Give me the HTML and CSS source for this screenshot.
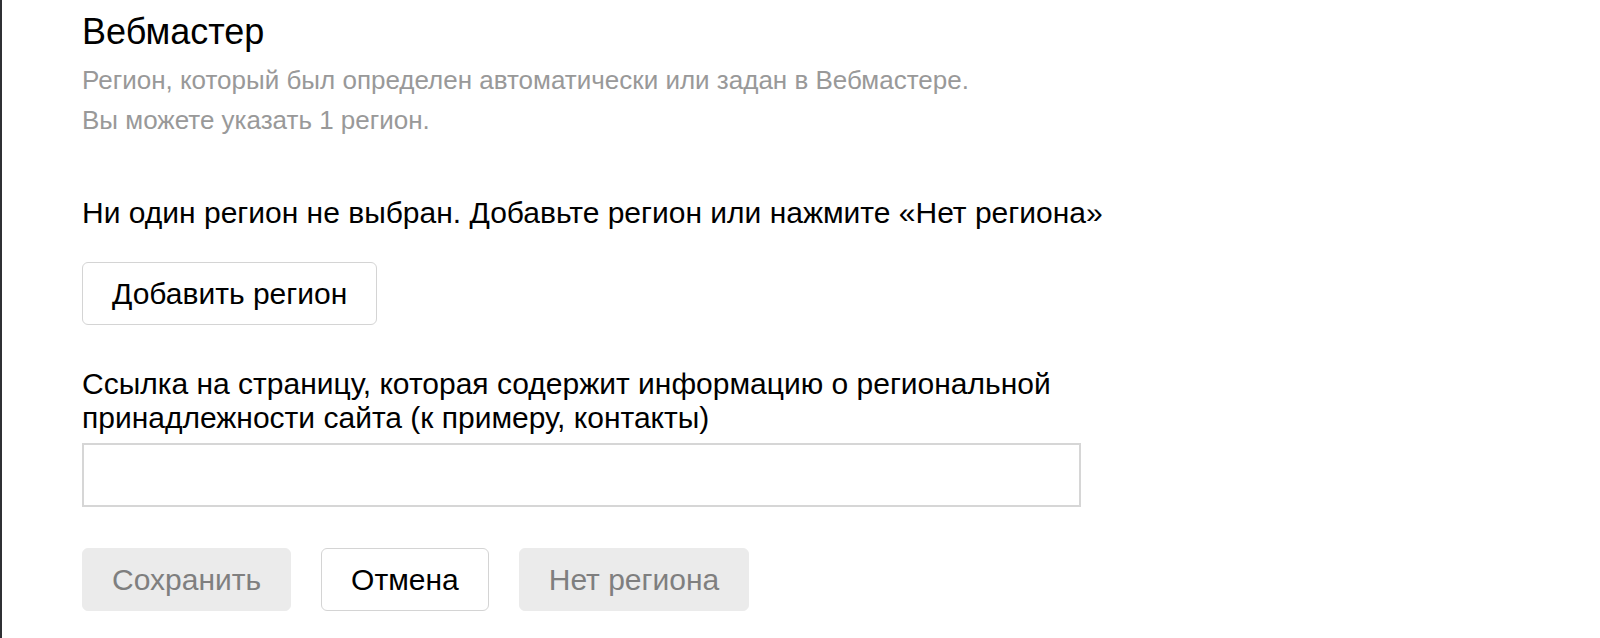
FILE: index.html
```html
<!DOCTYPE html>
<html lang="ru">
<head>
<meta charset="utf-8">
<title>Вебмастер — регион</title>
<link rel="stylesheet" href="styles.css">
</head>
<body>
<div class="page">
  <h1 class="title">Вебмастер</h1>
  <p class="hint">Регион, который был определен автоматически или задан в Вебмастере.<br>Вы можете указать 1 регион.</p>
  <p class="status">Ни один регион не выбран. Добавьте регион или нажмите «Нет региона»</p>
  <button class="btn">Добавить регион</button>
  <label class="label" for="link">Ссылка на страницу, которая содержит информацию о региональной<br>принадлежности сайта (к примеру, контакты)</label>
  <input class="input" id="link" type="text">
  <div class="actions">
    <button class="btn btn-disabled">Сохранить</button>
    <button class="btn">Отмена</button>
    <button class="btn btn-disabled">Нет региона</button>
  </div>
</div>
</body>
</html>
```

FILE: styles.css
```css
html, body {
  margin: 0;
  padding: 0;
  background: #fff;
}

body {
  font-family: "Liberation Sans", Arial, sans-serif;
  color: #000;
}

.page {
  box-sizing: border-box;
  min-height: 100vh;
  border-left: 2px solid #2f3034;
  padding: 10px 0 0 80px;
  display: flex;
  flex-direction: column;
  align-items: flex-start;
}

.title {
  margin: 0;
  font-size: 36px;
  line-height: 44px;
  font-weight: 400;
}

.hint {
  margin: 6px 0 0;
  font-size: 26px;
  line-height: 40px;
  color: #999;
}

.status {
  margin: 53px 0 0;
  font-size: 30px;
  line-height: 40px;
}

.btn {
  font-family: inherit;
  font-size: 30px;
  line-height: 40px;
  height: 63px;
  padding: 0 29px;
  border: 1px solid #d4d4d4;
  border-radius: 6px;
  background: #fff;
  color: #000;
}

.page > .btn {
  margin-top: 29px;
}

.label {
  margin-top: 42px;
  font-size: 30px;
  line-height: 34px;
}

.input {
  box-sizing: border-box;
  margin-top: 8px;
  width: 999px;
  height: 64px;
  border: 2px solid #d6d6d6;
  border-radius: 0;
  padding: 0 12px;
  font-family: inherit;
  font-size: 30px;
  outline: none;
}

.actions {
  margin-top: 41px;
  display: flex;
  gap: 30px;
}

.actions .btn {
  height: 63px;
}

.btn-disabled {
  background: #ebebeb;
  border-color: #ebebeb;
  color: #7f7f7f;
}
```
